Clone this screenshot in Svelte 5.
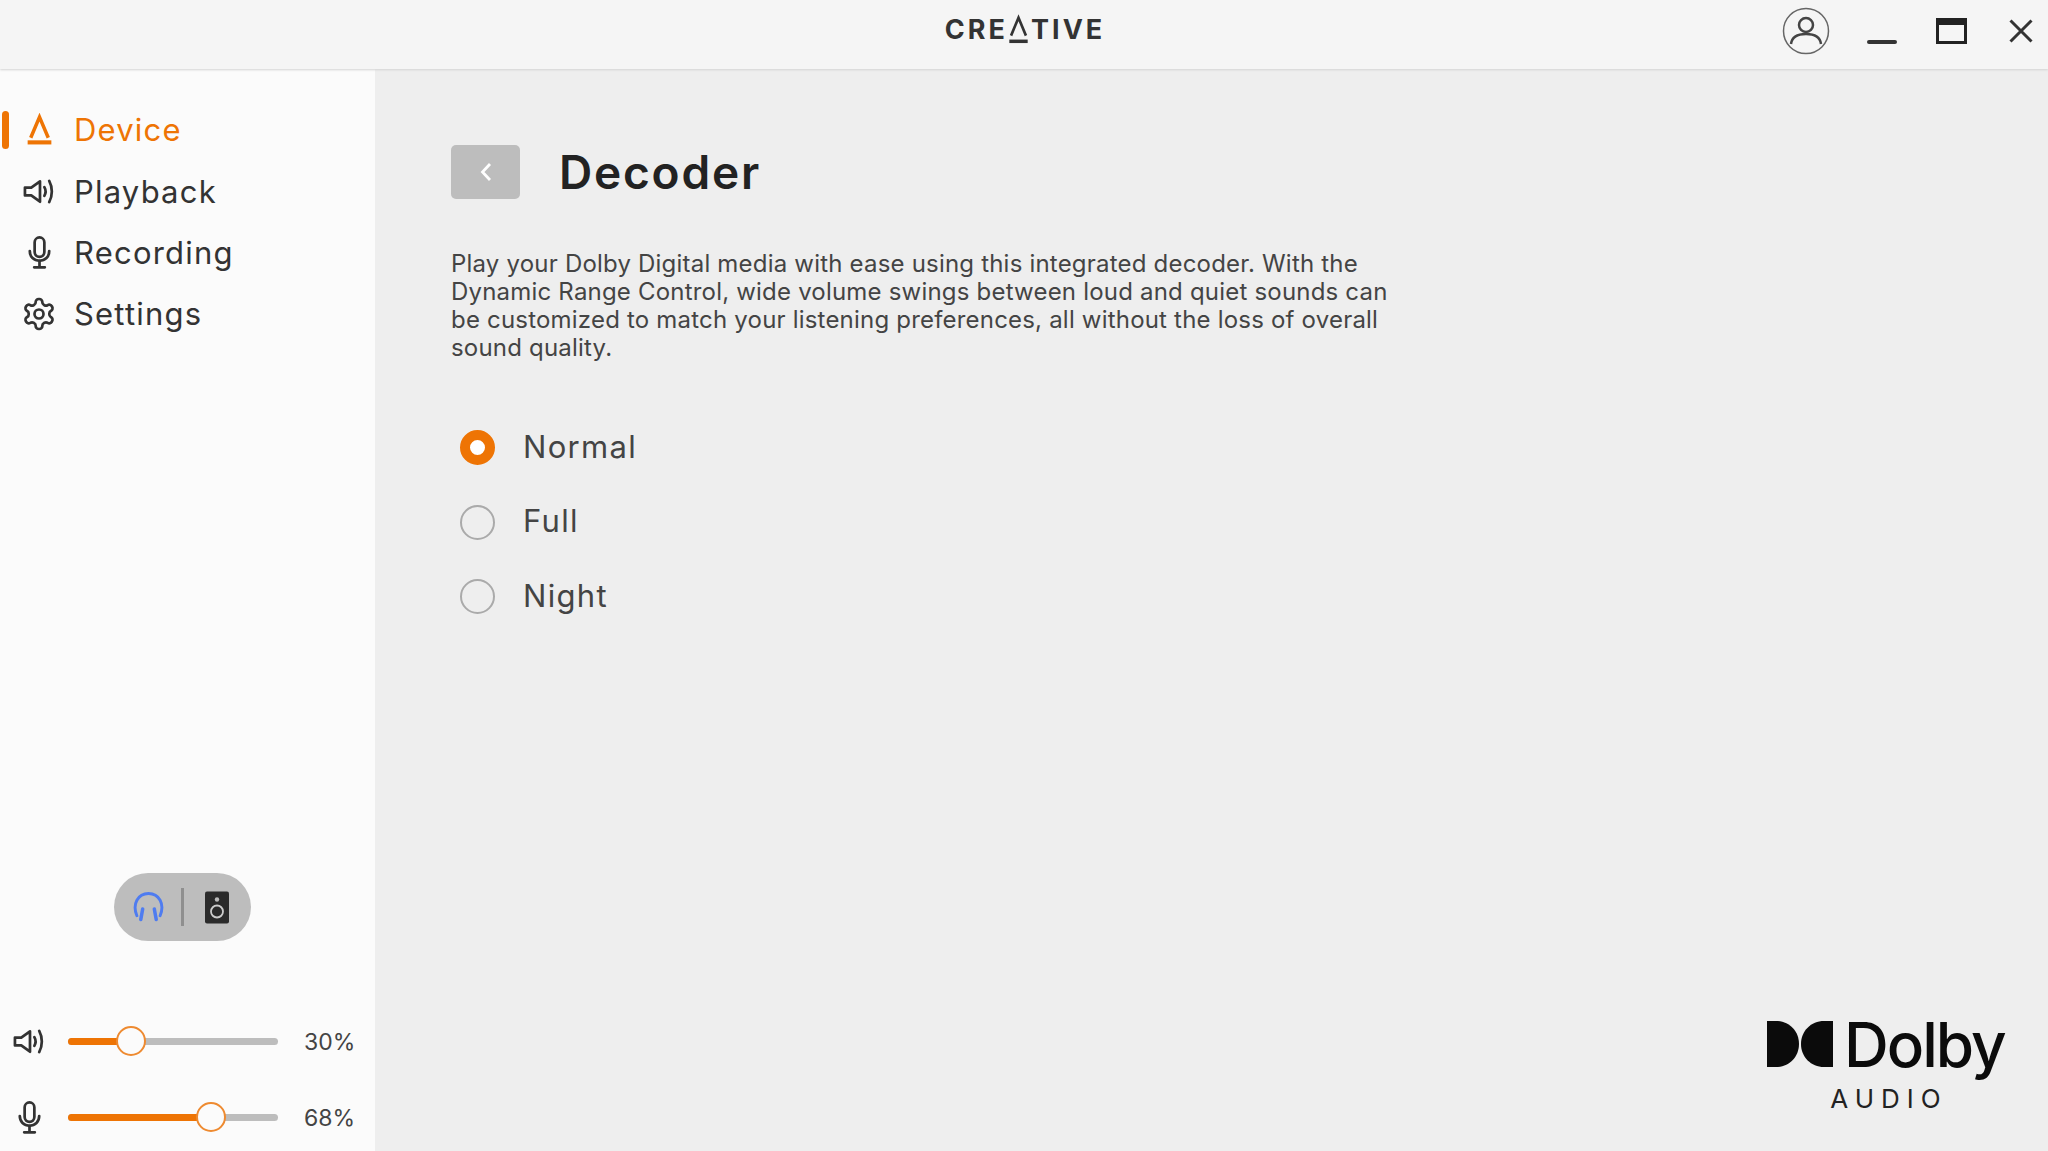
<script>
  const nav = ['Device', 'Playback', 'Recording', 'Settings'];
  const modes = ['Normal', 'Full', 'Night'];
</script>

{#snippet speaker()}
  <svg class="ico" viewBox="0 0 34 30" fill="none" stroke="currentColor" stroke-width="2.800" stroke-linejoin="round" stroke-linecap="round">
    <path d="M2 11v8h6.500l9 6.500v-21l-9 6.500z" />
    <path d="M22 10.500c1.600 2.800 1.600 6.200 0 9" />
    <path d="M27 4c3.600 6.600 3.600 15.400 0 22" />
  </svg>
{/snippet}

{#snippet mic()}
  <svg class="ico" viewBox="0 0 30 34" fill="none" stroke="currentColor" stroke-width="2.800" stroke-linecap="round">
    <rect x="10" y="1.500" width="10" height="20" rx="5" />
    <path d="M5 15.500c0 6 4.200 10 10 10s10-4 10-10" />
    <path d="M15 25.500v6.500M9.500 32.300h11" />
  </svg>
{/snippet}

<div class="app">
  <header class="titlebar">
    <div></div>
    <div class="logo">CRE<span class="logo-a">A<svg viewBox="0 0 24 32" fill="none" stroke="#333" aria-hidden="true"><path d="M3.500 23 12 2.500 20.500 23" stroke-width="3" /><path d="M1.500 29.500h21" stroke-width="4" /></svg></span>TIVE</div>
    <div class="win">
      <svg class="user" viewBox="0 0 48 48" fill="none" stroke="#444">
        <circle cx="24" cy="24" r="22.500" stroke-width="1.500" stroke="#666" />
        <circle cx="24" cy="18" r="7" stroke-width="2.500" />
        <path d="M9 37c1-8 8-10 15-10s14 2 15 10" stroke-width="2.500" />
      </svg>
      <span class="min"></span>
      <span class="max"></span>
      <svg class="close" viewBox="0 0 24 24" fill="none" stroke="#333" stroke-width="3"><path d="M1.500 1.500l21 21M22.500 1.500l-21 21" /></svg>
    </div>
  </header>

  <div class="body">
    <aside class="side">
      <nav class="nav">
        {#each nav as item, i}
          <div class="item" class:active={i === 0}>
            <span class="icon">
              {#if i === 0}
                <svg class="ico" viewBox="0 0 26 32" fill="none" stroke="currentColor"><path d="M4.500 24 13 4l8.500 20" stroke-width="3.400" /><path d="M1.500 28.500h23" stroke-width="4" /></svg>
              {:else if i === 1}
                {@render speaker()}
              {:else if i === 2}
                {@render mic()}
              {:else}
                <svg class="ico gear" viewBox="0 0 24 24" fill="none" stroke="currentColor" stroke-width="1.800"><path d="M12.220 2h-.44a2 2 0 0 0-2 2v.18a2 2 0 0 1-1 1.730l-.43.25a2 2 0 0 1-2 0l-.15-.08a2 2 0 0 0-2.730.73l-.22.38a2 2 0 0 0 .73 2.730l.15.1a2 2 0 0 1 1 1.720v.51a2 2 0 0 1-1 1.740l-.15.09a2 2 0 0 0-.73 2.730l.22.38a2 2 0 0 0 2.730.73l.15-.08a2 2 0 0 1 2 0l.43.25a2 2 0 0 1 1 1.730V20a2 2 0 0 0 2 2h.44a2 2 0 0 0 2-2v-.18a2 2 0 0 1 1-1.730l.43-.25a2 2 0 0 1 2 0l.15.08a2 2 0 0 0 2.730-.73l.22-.39a2 2 0 0 0-.73-2.730l-.15-.08a2 2 0 0 1-1-1.740v-.5a2 2 0 0 1 1-1.740l.15-.09a2 2 0 0 0 .73-2.730l-.22-.38a2 2 0 0 0-2.730-.73l-.15.08a2 2 0 0 1-2 0l-.43-.25a2 2 0 0 1-1-1.730V4a2 2 0 0 0-2-2z" /><circle cx="12" cy="12" r="3" /></svg>
              {/if}
            </span>
            <span>{item}</span>
          </div>
        {/each}
      </nav>

      <div class="pill">
        <svg class="hp" viewBox="0 0 32 32" fill="none" stroke="#4f7cf0" stroke-linecap="round">
          <path d="M4 25C-1 13 5 2 16 2s17 11 12 23" stroke-width="3" />
          <path d="M10 18 8 29M22 18l2 11" stroke-width="3.600" />
        </svg>
        <span class="sep"></span>
        <svg class="spk" viewBox="0 0 24 32">
          <rect width="24" height="32" rx="2" fill="#2b2b2b" />
          <circle cx="12" cy="8" r="2.200" fill="#bbb" />
          <circle cx="12" cy="20" r="6" fill="none" stroke="#ccc" stroke-width="1.800" />
        </svg>
      </div>

      <div class="sliders">
        <div class="row">
          <span class="row-icon">{@render speaker()}</span>
          <div class="track"><div class="fill" style="width: 30%"></div><span class="thumb"></span></div>
          <span class="pct">30%</span>
        </div>
        <div class="row">
          <span class="row-icon">{@render mic()}</span>
          <div class="track"><div class="fill" style="width: 68%"></div><span class="thumb"></span></div>
          <span class="pct">68%</span>
        </div>
      </div>
    </aside>

    <main class="main">
      <div class="head">
        <button class="back" aria-label="Back">
          <svg viewBox="0 0 14 20" fill="none" stroke="#fff" stroke-width="2.800"><path d="M11 2 3.500 10l7.500 8" /></svg>
        </button>
        <h1>Decoder</h1>
      </div>
      <p class="desc">
        <span>Play your Dolby Digital media with ease using this integrated decoder. With the</span>
        <span>Dynamic Range Control, wide volume swings between loud and quiet sounds can</span>
        <span>be customized to match your listening preferences, all without the loss of overall</span>
        <span>sound quality.</span>
      </p>
      <div class="radios">
        {#each modes as m, i}
          <div class="radio">
            <span class="dot" class:on={i === 0}></span>
            <span class="label">{m}</span>
          </div>
        {/each}
      </div>

      <div class="dolby">
        <div class="dolby-top">
          <svg viewBox="0 0 66 46" fill="#0b0b0b"><path d="M0 0h9C22 0 32 10 32 23S22 46 9 46H0z" /><path d="M66 0h-9C44 0 34 10 34 23s10 23 23 23h9z" /></svg>
          <span>Dolby</span>
        </div>
        <div class="audio">AUDIO</div>
      </div>
    </main>
  </div>
</div>

<style>
  :global(body) {
    margin: 0;
    font-family: Inter, "Noto Sans", sans-serif;
    color: #333;
    background: #eee;
  }
  .app {
    width: 2048px;
    height: 1151px;
    display: flex;
    flex-direction: column;
    overflow: hidden;
  }
  .titlebar {
    height: 69px;
    flex: none;
    display: grid;
    grid-template-columns: 1fr auto 1fr;
    align-items: center;
    background: #f5f5f5;
    box-shadow: 0 1px 2px #d4d4d4;
    position: relative;
    z-index: 2;
  }
  .logo {
    font-size: 27px;
    font-weight: 700;
    letter-spacing: 3px;
    color: #333;
    display: flex;
    align-items: center;
    margin-top: -10px;
    margin-left: 2px;
  }
  .logo-a {
    position: relative;
    color: transparent;
    display: inline-block;
  }
  .logo-a svg {
    position: absolute;
    left: 0;
    top: 1px;
    width: 21px;
    height: 31px;
  }
  .win {
    display: flex;
    align-items: center;
    justify-content: flex-end;
    padding: 0 15px 7px 0;
  }
  .user {
    width: 48px;
    height: 48px;
    margin-right: 37px;
  }
  .min {
    width: 30px;
    height: 4px;
    background: #333;
    border-radius: 2px;
    margin-top: 22px;
    margin-right: 39px;
  }
  .max {
    width: 31px;
    height: 26px;
    box-sizing: border-box;
    border: 3px solid #222;
    border-top-width: 7px;
    margin-right: 42px;
  }
  .close {
    width: 24px;
    height: 24px;
  }
  .body {
    flex: 1;
    display: flex;
    min-height: 0;
  }
  .side {
    width: 375px;
    flex: none;
    background: #fbfbfb;
    display: flex;
    flex-direction: column;
    align-items: stretch;
  }
  .nav {
    padding-top: 30px;
  }
  .item {
    height: 61.400px;
    display: flex;
    align-items: center;
    position: relative;
    font-size: 31px;
    letter-spacing: 1.2px;
    color: #333;
  }
  .item.active {
    color: #ee7404;
  }
  .item.active::before {
    content: "";
    position: absolute;
    left: 2px;
    top: 12px;
    width: 7px;
    height: 38px;
    border-radius: 4px;
    background: #ee7404;
  }
  .icon {
    width: 74px;
    flex: none;
    display: flex;
    justify-content: center;
    padding-left: 4px;
    box-sizing: border-box;
  }
  .ico {
    width: 33px;
    height: 33px;
    display: block;
  }
  .gear {
    width: 36px;
    height: 36px;
  }
  .pill {
    margin: auto 0 80px 114px;
    width: 137px;
    height: 68px;
    border-radius: 34px;
    background: #bdbdbd;
    display: flex;
    align-items: center;
    padding-left: 19px;
    box-sizing: border-box;
    flex: none;
  }
  .hp {
    width: 31px;
    height: 32px;
  }
  .sep {
    width: 3px;
    height: 38px;
    background: #8f8f8f;
    margin: 0 21px 0 17px;
  }
  .spk {
    width: 24px;
    height: 33px;
  }
  .sliders {
    display: flex;
    flex-direction: column;
    gap: 36px;
    padding-bottom: 14px;
  }
  .row {
    height: 40px;
    display: flex;
    align-items: center;
    position: relative;
  }
  .row-icon {
    width: 68px;
    flex: none;
    display: flex;
    justify-content: center;
    padding-right: 9px;
    box-sizing: border-box;
  }
  .track {
    width: 210px;
    height: 7px;
    border-radius: 4px;
    background: #bdbdbd;
    display: flex;
    align-items: center;
    flex: none;
  }
  .fill {
    height: 7px;
    border-radius: 4px 0 0 4px;
    background: #ee7404;
  }
  .thumb {
    width: 30px;
    height: 30px;
    box-sizing: border-box;
    flex: none;
    margin-left: -15px;
    border-radius: 50%;
    background: #fbfbfb;
    border: 2px solid #ee8a30;
    position: relative;
  }
  .pct {
    margin: 2px 0 0 26px;
    font-size: 23px;
    color: #444;
  }
  .main {
    flex: 1;
    padding: 76px 0 0 76px;
    position: relative;
    background: #eee;
  }
  .head {
    display: flex;
    align-items: center;
    gap: 39px;
  }
  .back {
    width: 69px;
    height: 54px;
    border: 0;
    padding: 0;
    border-radius: 5px;
    background: #bdbdbd;
    display: flex;
    align-items: center;
    justify-content: center;
  }
  .back svg {
    width: 14px;
    height: 20px;
  }
  h1 {
    margin: 0;
    font-size: 46px;
    font-weight: 600;
    letter-spacing: 1.800px;
    color: #222;
    line-height: 54px;
  }
  .desc {
    margin: 51px 0 0;
    font-size: 24px;
    letter-spacing: 0.200px;
    line-height: 28px;
    color: #444;
  }
  .desc span {
    display: block;
    white-space: nowrap;
  }
  .radios {
    margin-top: 68px;
    padding-left: 9px;
    display: flex;
    flex-direction: column;
    gap: 39.500px;
  }
  .radio {
    height: 35px;
    display: flex;
    align-items: center;
    gap: 28px;
    font-size: 31px;
    letter-spacing: 1.300px;
    color: #444;
  }
  .label {
    margin-top: -3px;
  }
  .dot {
    width: 35px;
    height: 35px;
    box-sizing: border-box;
    border-radius: 50%;
    border: 2px solid #aaa;
    flex: none;
  }
  .dot.on {
    border: 10px solid #ee7404;
    background: #fff;
  }
  .dolby {
    position: absolute;
    right: 43px;
    bottom: 37px;
    width: 238px;
  }
  .dolby-top {
    display: flex;
    align-items: center;
    height: 60px;
    color: #0b0b0b;
    font-size: 62px;
    font-weight: 500;
    letter-spacing: -2px;
  }
  .dolby-top svg {
    width: 66px;
    height: 46px;
    flex: none;
    margin-right: 11px;
  }
  .audio {
    text-align: center;
    font-size: 26px;
    font-weight: 400;
    letter-spacing: 7px;
    color: #222;
    margin-top: 9px;
    padding-left: 6px;
  }
</style>
